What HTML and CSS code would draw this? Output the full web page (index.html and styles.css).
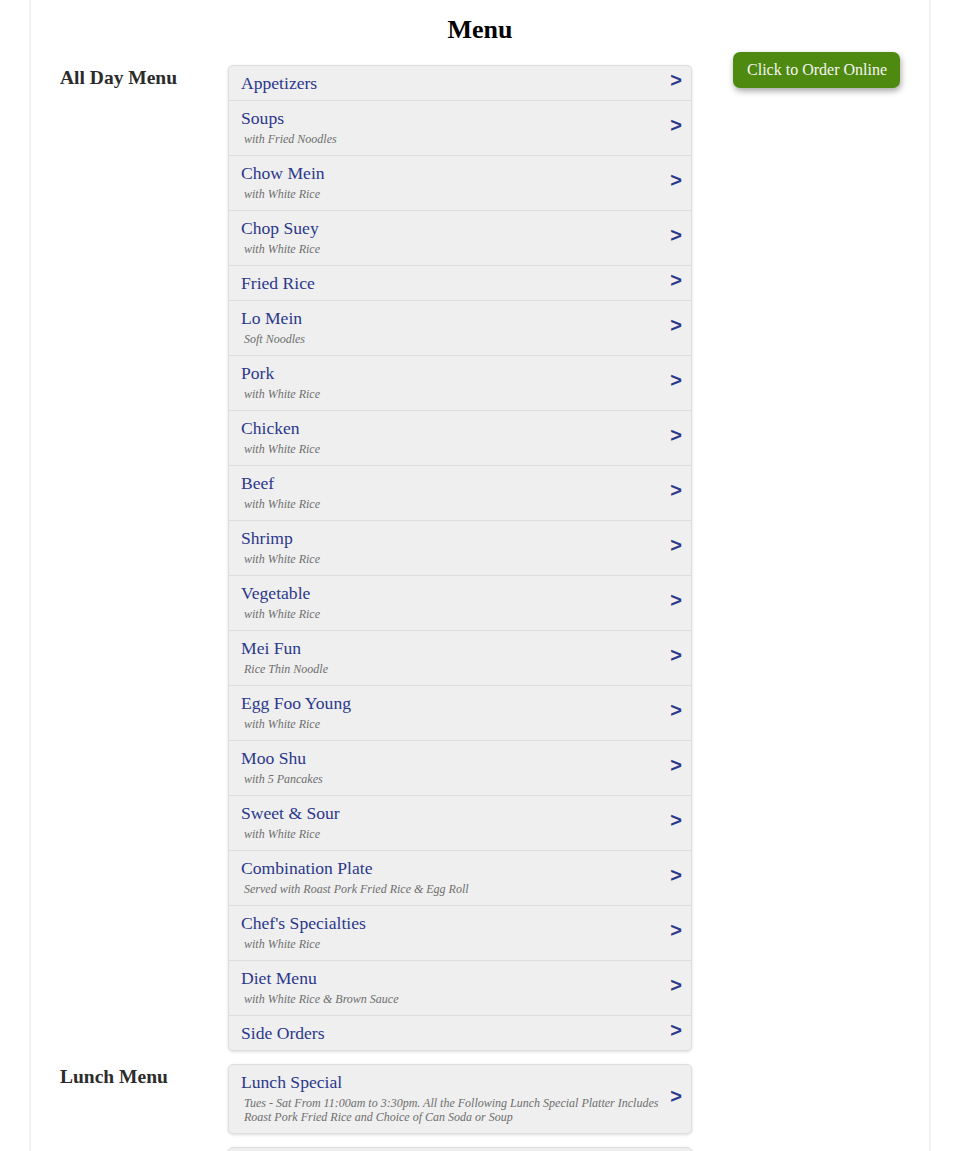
FILE: index.html
```html
<!DOCTYPE html>
<html lang="en">
<head>
<meta charset="utf-8">
<title>Menu</title>
<link rel="stylesheet" href="styles.css">
</head>
<body>
<div class="page">
  <h1 class="title">Menu</h1>
  <div class="layout">
    <div class="menus">
      <section class="section">
        <h3 class="label">All Day Menu</h3>
        <div class="card">
          <a class="item"><div class="info"><div class="name">Appetizers</div></div><span class="arrow">&gt;</span></a>
          <a class="item"><div class="info"><div class="name">Soups</div><div class="sub">with Fried Noodles</div></div><span class="arrow">&gt;</span></a>
          <a class="item"><div class="info"><div class="name">Chow Mein</div><div class="sub">with White Rice</div></div><span class="arrow">&gt;</span></a>
          <a class="item"><div class="info"><div class="name">Chop Suey</div><div class="sub">with White Rice</div></div><span class="arrow">&gt;</span></a>
          <a class="item"><div class="info"><div class="name">Fried Rice</div></div><span class="arrow">&gt;</span></a>
          <a class="item"><div class="info"><div class="name">Lo Mein</div><div class="sub">Soft Noodles</div></div><span class="arrow">&gt;</span></a>
          <a class="item"><div class="info"><div class="name">Pork</div><div class="sub">with White Rice</div></div><span class="arrow">&gt;</span></a>
          <a class="item"><div class="info"><div class="name">Chicken</div><div class="sub">with White Rice</div></div><span class="arrow">&gt;</span></a>
          <a class="item"><div class="info"><div class="name">Beef</div><div class="sub">with White Rice</div></div><span class="arrow">&gt;</span></a>
          <a class="item"><div class="info"><div class="name">Shrimp</div><div class="sub">with White Rice</div></div><span class="arrow">&gt;</span></a>
          <a class="item"><div class="info"><div class="name">Vegetable</div><div class="sub">with White Rice</div></div><span class="arrow">&gt;</span></a>
          <a class="item"><div class="info"><div class="name">Mei Fun</div><div class="sub">Rice Thin Noodle</div></div><span class="arrow">&gt;</span></a>
          <a class="item"><div class="info"><div class="name">Egg Foo Young</div><div class="sub">with White Rice</div></div><span class="arrow">&gt;</span></a>
          <a class="item"><div class="info"><div class="name">Moo Shu</div><div class="sub">with 5 Pancakes</div></div><span class="arrow">&gt;</span></a>
          <a class="item"><div class="info"><div class="name">Sweet &amp; Sour</div><div class="sub">with White Rice</div></div><span class="arrow">&gt;</span></a>
          <a class="item"><div class="info"><div class="name">Combination Plate</div><div class="sub">Served with Roast Pork Fried Rice &amp; Egg Roll</div></div><span class="arrow">&gt;</span></a>
          <a class="item"><div class="info"><div class="name">Chef's Specialties</div><div class="sub">with White Rice</div></div><span class="arrow">&gt;</span></a>
          <a class="item"><div class="info"><div class="name">Diet Menu</div><div class="sub">with White Rice &amp; Brown Sauce</div></div><span class="arrow">&gt;</span></a>
          <a class="item"><div class="info"><div class="name">Side Orders</div></div><span class="arrow">&gt;</span></a>
        </div>
      </section>
      <section class="section">
        <h3 class="label">Lunch Menu</h3>
        <div class="card">
          <a class="item"><div class="info"><div class="name">Lunch Special</div><div class="sub">Tues - Sat From 11:00am to 3:30pm. All the Following Lunch Special Platter Includes Roast Pork Fried Rice and Choice of Can Soda or Soup</div></div><span class="arrow">&gt;</span></a>
        </div>
      </section>
      <section class="section">
        <div class="label"></div>
        <div class="card card-empty"></div>
      </section>
    </div>
    <aside class="aside">
      <a class="order-btn">Click to Order Online</a>
    </aside>
  </div>
</div>
</body>
</html>
```

FILE: styles.css
```css
html, body {
  margin: 0;
  padding: 0;
  background: #fff;
}

body {
  font-family: "Liberation Serif", "Times New Roman", serif;
  color: #333;
}

.page {
  width: 840px;
  margin: 0 auto;
  padding: 15px 29px 0;
  border-left: 2px solid #f1f1f1;
  border-right: 2px solid #f1f1f1;
  min-height: 1136px;
}

.title {
  margin: 0 0 7px;
  font-size: 26px;
  line-height: 30px;
  font-weight: bold;
  text-align: center;
  color: #000;
}

.layout {
  display: flex;
  align-items: flex-start;
}

.menus {
  width: 632px;
  padding-top: 13px;
  display: flex;
  flex-direction: column;
  gap: 13px;
}

.section {
  display: flex;
  align-items: flex-start;
}

.label {
  width: 168px;
  flex: none;
  margin: 1.5px 0 0;
  font-size: 19.5px;
  line-height: 22px;
  font-weight: bold;
  color: #2b2b2b;
}

.card {
  width: 462px;
  background: #efefef;
  border: 1px solid #dedede;
  border-radius: 5px;
  box-shadow: 0 1px 3px rgba(0, 0, 0, 0.14);
}

.card-empty {
  height: 40px;
}

.item {
  display: flex;
  align-items: center;
  padding: 7px 9px 7px 12px;
  border-top: 1px solid #dcdcdc;
  cursor: pointer;
}

.item:first-child {
  border-top: none;
}

.info {
  flex: 1;
  min-width: 0;
}

.name {
  font-size: 17.6px;
  line-height: 20px;
  color: #2b388c;
}

.sub {
  margin: 4px 0 2px;
  padding-left: 3px;
  font-size: 12px;
  line-height: 14px;
  font-style: italic;
  color: #6e6e6e;
}

.arrow {
  flex: none;
  margin: -6px 0 0 8px;
  font-family: "Liberation Sans", Arial, sans-serif;
  font-weight: bold;
  font-size: 20px;
  line-height: 22px;
  color: #2b388c;
}

.aside {
  flex: 1;
  display: flex;
  justify-content: flex-end;
}

.order-btn {
  display: inline-block;
  padding: 9px 13px 9px 14px;
  background: #4e8a0f;
  color: #f6f6f6;
  font-size: 16px;
  line-height: 18px;
  border-radius: 7px;
  box-shadow: 1px 3px 6px rgba(0, 0, 0, 0.35);
  cursor: pointer;
}
```
